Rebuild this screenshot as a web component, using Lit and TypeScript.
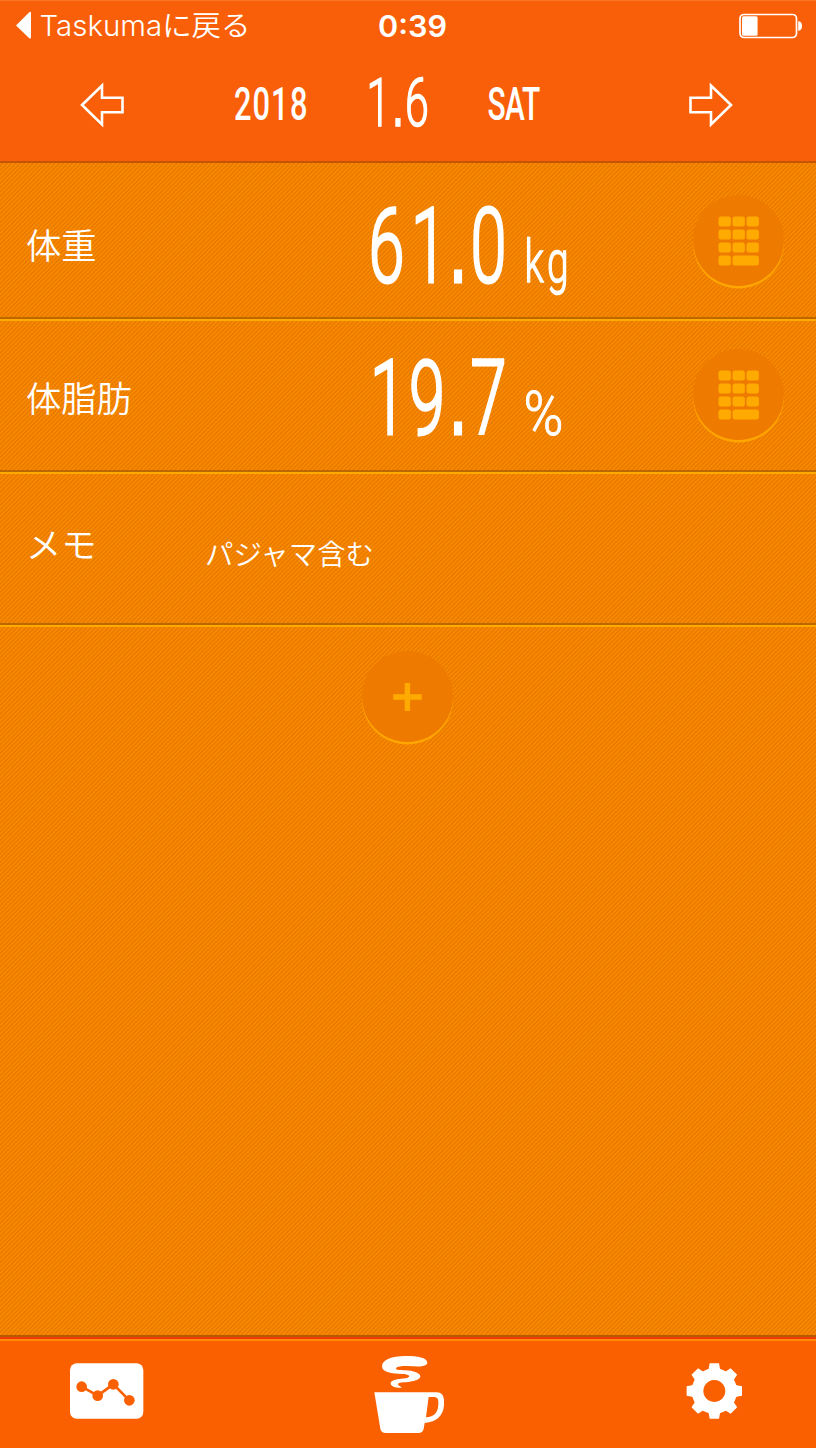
import { LitElement, html, svg, css } from "lit";
import { customElement, property } from "lit/decorators.js";

interface Glyphs {
  text: string;
  /** left origin of every character, in drawing pixels */
  x: number[];
  y: number;
  size: number;
  squeeze: number;
  weight: number;
  stroke?: number;
}

/** Narrow numerals: characters squeezed horizontally and placed on a fixed pitch. */
@customElement("narrow-text")
class NarrowText extends LitElement {
  @property({ type: Number }) width = 100;
  @property({ type: Number }) height = 100;
  @property({ attribute: false }) runs: Glyphs[] = [];
  static styles = css`
    :host { display: block; }
    svg { display: block; overflow: visible; }
    text { font-family: Roboto, "Liberation Sans", sans-serif; fill: #fff; stroke: #fff; }
    .dot { font-family: "Liberation Sans", sans-serif; }
  `;
  render() {
    return html`<svg width=${this.width} height=${this.height}>
      ${this.runs.map((r) => svg`<text
        transform="scale(${r.squeeze} 1)" y=${r.y}
        x=${r.x.map((v) => (v / r.squeeze).toFixed(2)).join(" ")}
        font-size=${r.size} font-weight=${r.weight}
        stroke-width=${r.stroke ?? 0}>${[...r.text].map((c) =>
          c === "." ? svg`<tspan class="dot">.</tspan>` : svg`<tspan>${c}</tspan>`)}</text>`)}
    </svg>`;
  }
}

@customElement("round-button")
class RoundButton extends LitElement {
  @property() kind = "keypad";
  static styles = css`
    :host { display: block; width: 91px; height: 91px; }
    .disc {
      width: 91px; height: 91px; border-radius: 50%;
      background: #ef7a00; box-shadow: 0 2.5px 0 #ffa600;
    }
    svg { display: block; }
    .ink { fill: #ffaa00; }
  `;
  render() {
    const keys = [0, 1, 2, 3].flatMap((r) =>
      (r < 3 ? [0, 1, 2] : [0]).map((c) => svg`<rect class="ink"
        x=${25.5 + c * 14} y=${21.4 + r * 13} width="12.4" height="10" rx="2.5"></rect>`));
    return html`<div class="disc"><svg width="91" height="91">
      ${this.kind === "keypad"
        ? svg`${keys}<rect class="ink" x="39.5" y="60.4" width="26.4" height="10" rx="2.5"></rect>`
        : svg`<path class="ink" d="M42.700 32h5.400v11.300h11.600v5.400H48.100V60H42.700V48.700H31.300v-5.400H42.700z"></path>`}
    </svg></div>`;
  }
}

@customElement("app-root")
class AppRoot extends LitElement {
  static styles = css`
    :host {
      display: flex; flex-direction: column; width: 816px; height: 1448px;
      color: #fff; font-family: Inter, "Noto Sans CJK JP", sans-serif;
      overflow: hidden;
    }
    svg { display: block; overflow: visible; }
    .top {
      box-sizing: border-box; height: 163px; flex: none; background: #f85f08;
      border-bottom: 2px solid #c65405; box-shadow: inset 0 1px 0 #fa7527;
    }
    .status {
      display: grid; grid-template-columns: 363px 1fr 77px; height: 52px;
      padding: 0 0 0 15px; align-items: center;
    }
    .status text { fill: #fff; font-family: Inter, "Noto Sans CJK JP", sans-serif; }
    .status .back { font-weight: 350; }
    .dates {
      display: grid; grid-template-columns: 150px 458px 45px; height: 105px;
      padding-left: 80px; align-items: center;
    }
    .arrow { fill: none; stroke: #fff; stroke-width: 2.6; }
    .body {
      flex: 1; display: flex; flex-direction: column;
      background: repeating-linear-gradient(135deg, #f98700 0, #f98700 1.2px, #e47900 1.9px, #e47900 2.4px, #f98700 3.077px);
    }
    .row {
      box-sizing: border-box; height: 153px; flex: none; display: grid;
      grid-template-columns: 324px 343px 91px; align-items: center;
      padding: 0 0 4px 26px; border-bottom: 2px solid #ffaa00;
      box-shadow: inset 0 -2px 0 #bd6700;
    }
    .row.first { height: 158px; padding-bottom: 1px; }
    .row.memo { grid-template-columns: 179px 1fr; padding-bottom: 7px; }
    .label {
      font-family: "Noto Sans CJK JP", sans-serif; font-weight: 350;
      font-size: 35.3px; line-height: 50px; padding-top: 4px;
    }
    .memo .label { padding-bottom: 6px; padding-top: 0; line-height: 48px; }
    .first .label { padding-top: 6px; }
    .note {
      font-family: "Noto Sans CJK JP", sans-serif; font-weight: 350;
      font-size: 28.4px; line-height: 40px; padding-top: 13px;
    }
    .add { display: flex; justify-content: center; padding: 23.5px 2px 0 0; }
    .tabs {
      box-sizing: border-box; height: 113px; flex: none; background: #fa6000;
      border-top: 2px solid #b65a02;
      box-shadow: inset 0 2px 0 #f23c08, inset 0 4px 0 #ff8a08;
      display: grid; grid-template-columns: 300px 320px 1fr; padding-left: 50px;
    }
    .tabs svg { margin-top: -12px; }
    .white { fill: #fff; }
    .mark { fill: #fa6000; }
    .line { fill: none; stroke: #fa6000; stroke-width: 8; }
  `;

  private gear() {
    const teeth = [0, 45, 90, 135, 180, 225, 270, 315].map((a) => svg`
      <path class="white" transform="rotate(${a} 133 198)" d="M106 146L116 131 119 115H147L150 131 160 146z"></path>`);
    return svg`${teeth}<path class="white" fill-rule="evenodd"
      d="M133 130a68 68 0 1 0 .1 0zM133 165a33 33 0 1 1 -.1 0z"></path>`;
  }

  render() {
    return html`
      <header class="top">
        <div class="status">
          <svg width="240" height="52">
            <path class="white" d="M1 25.500L14 12.500Q16 11 16 13V37Q16 39.500 14 38z"></path>
            <text class="back" x="24.500" y="35.500" font-size="28.500" textLength="211" lengthAdjust="spacingAndGlyphs">Taskumaに戻る</text>
          </svg>
          <svg width="80" height="52">
            <text x="0" y="37" font-size="29.500" font-weight="600" textLength="69" lengthAdjust="spacingAndGlyphs">0:39</text>
          </svg>
          <svg width="64" height="52">
            <rect x="1" y="14.500" width="56.500" height="23" rx="4" fill="none" stroke="#fff" stroke-width="1.700"></rect>
            <rect class="white" x="3" y="16.200" width="15.600" height="19.500" rx="1.500"></rect>
            <path class="white" d="M59.200 21.200q3.800 0 3.800 4.800t-3.800 4.800z"></path>
          </svg>
        </div>
        <div class="dates">
          <svg width="45" height="46"><path class="arrow" d="M2 23L22 3.500V15.800H42.500V30.200H22V42.500z"></path></svg>
          <narrow-text width="330" height="60" .runs=${[
            { text: "2018", x: [4, 22.5, 41, 60], y: 45.5, size: 46, squeeze: 0.67, weight: 500 },
            { text: "1.6", x: [136.5, 162, 175], y: 50.5, size: 67, squeeze: 0.64, weight: 300, stroke: 1.7 },
            { text: "SAT", x: [257.500, 275, 292], y: 45.5, size: 46, squeeze: 0.65, weight: 500 },
          ]}></narrow-text>
          <svg width="45" height="46"><path class="arrow" d="M43 23L23 3.500V15.800H2.500V30.200H23V42.500z"></path></svg>
        </div>
      </header>
      <main class="body">
        <section class="row first">
          <div class="label">体重</div>
          <narrow-text width="240" height="140" .runs=${[
            { text: "61.0", x: [18.5, 61, 99, 120.5], y: 110.8, size: 103, squeeze: 0.63, weight: 300, stroke: 3 },
            { text: "kg", x: [174.5, 197], y: 111.5, size: 60, squeeze: 0.65, weight: 300, stroke: 1.6 },
          ]}></narrow-text>
          <round-button></round-button>
        </section>
        <section class="row">
          <div class="label">体脂肪</div>
          <narrow-text width="240" height="140" .runs=${[
            { text: "19.7", x: [20, 59, 99, 120.5], y: 109.5, size: 103, squeeze: 0.63, weight: 300, stroke: 3 },
            { text: "%", x: [173.500], y: 110.5, size: 62, squeeze: 0.87, weight: 300, stroke: 1 },
          ]}></narrow-text>
          <round-button></round-button>
        </section>
        <section class="row memo">
          <div class="label">メモ</div>
          <div class="note">パジャマ含む</div>
        </section>
        <div class="add"><round-button kind="plus"></round-button></div>
      </main>
      <footer class="tabs">
        <svg width="120" height="123" viewBox="0 0 360 369">
          <rect class="white" x="60" y="115" width="220" height="166" rx="20"></rect>
          <path class="line" d="M95 185L143 212 190 178 238 226"></path>
          ${[[95, 185], [143, 212], [190, 178], [238, 226]].map(
            ([x, y]) => svg`<circle class="mark" cx=${x} cy=${y} r="16"></circle>`)}
        </svg>
        <svg width="120" height="123" viewBox="0 0 360 369">
          <path class="white" fill-rule="evenodd" d="M73 202H260Q281 203 282 224V240Q279 288 224 294L221 311Q218 324 205 324H107Q94 324 91 311zM236 216L228 277Q264 276 265 238V228Q264 217 253 216z"></path>
          <path class="white" d="M232 113C231 98 204 93 166 93C125 93 96 105 96 124C96 143 125 146 158 147C172 148 180 151 177 155C172 161 151 160 136 164C121 168 119 175 126 182C133 188 144 188 155 188C155 185 143 182 144 177C147 170 170 174 190 168C205 164 211 160 211 154C210 144 191 137 165 136C150 135 138 136 138 130C138 125 153 122 172 123C190 124 206 126 218 123C227 121 232 118 232 113z"></path>
        </svg>
        <svg width="146" height="123" viewBox="0 0 438 369">${this.gear()}</svg>
      </footer>`;
  }
}
